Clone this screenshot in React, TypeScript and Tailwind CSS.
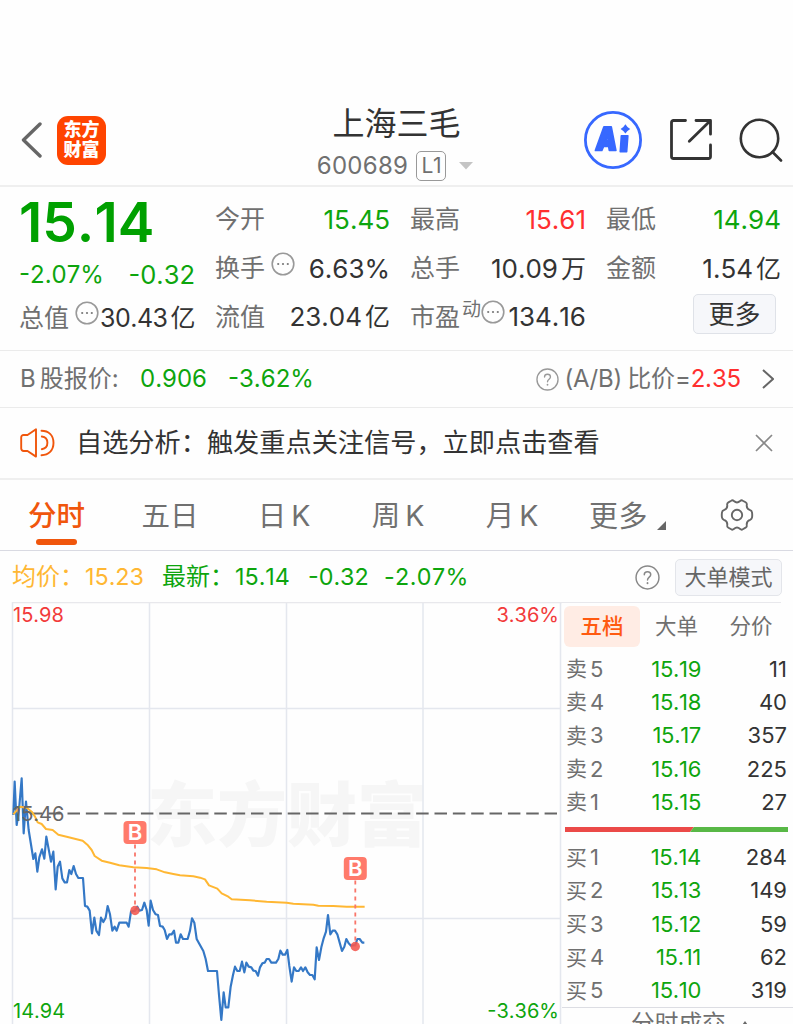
import { clsx } from 'clsx';

const SELLS = [
  ['卖', '5', '15.19', '11'],
  ['卖', '4', '15.18', '40'],
  ['卖', '3', '15.17', '357'],
  ['卖', '2', '15.16', '225'],
  ['卖', '1', '15.15', '27'],
];

const BUYS = [
  ['买', '1', '15.14', '284'],
  ['买', '2', '15.13', '149'],
  ['买', '3', '15.12', '59'],
  ['买', '4', '15.11', '62'],
  ['买', '5', '15.10', '319'],
];

const TABS = [
  ['五日', ''],
  ['日', 'K'],
  ['周', 'K'],
  ['月', 'K'],
];

const PRICE_LINE =
  '40,165 44,65 50,195 57,150 65,55 71,220 78,125 86,210 100,297 106,280 112,335 118,292 126,268 133,296 139,230 153,305 160,275 167,388 173,320 180,305 187,355 194,367 201,367 208,330 214,342 221,318 228,342 235,354 249,354 255,438 262,440 269,452 276,520 283,473 289,512 297,525 303,473 310,486 317,473 323,438 330,463 337,512 344,500 350,512 358,488 380,488 386,500 393,455 405,452 412,440 418,452 426,450 433,428 440,450 446,497 452,422 459,450 467,463 474,465 480,498 488,500 494,510 501,537 508,523 515,523 522,512 528,548 535,548 542,523 549,537 563,537 570,512 576,475 583,488 590,537 597,550 610,573 617,597 624,633 651,633 657,705 664,780 671,697 677,742 685,742 692,680 699,645 705,620 712,633 719,633 726,605 733,637 739,608 746,620 754,622 760,632 767,633 774,647 780,622 787,610 794,608 800,597 807,597 814,608 828,608 835,597 841,572 848,584 855,584 862,570 868,618 875,665 882,622 889,633 896,633 903,622 909,633 916,622 923,637 930,645 937,645 944,658 950,562 957,600 964,562 971,535 978,515 984,465 991,523 998,512 1005,512 1012,523 1019,548 1026,573 1033,560 1039,537 1046,550 1053,557 1066,555 1072,537 1079,537 1087,548 1093,548';

const AVERAGE_LINE =
  '40,163 60,140 80,143 95,155 105,170 113,187 125,192 138,207 158,210 175,224 200,230 248,242 262,254 275,270 284,288 305,302 330,308 358,316 400,322 440,324 470,328 495,337 520,342 540,346 580,349 600,353 615,358 627,376 652,386 665,400 685,410 695,418 750,421 800,425 860,428 880,431 940,434 955,437 1000,438 1040,440 1094,440';

function MoreDots({ className }: { className?: string }) {
  return (
    <svg viewBox="0 0 24 24" className={clsx('h-6 w-6 shrink-0', className)} fill="none">
      <circle cx="12" cy="12" r="10.8" stroke="#999" strokeWidth="1.6" />
      <circle cx="7.2" cy="12" r="1.1" fill="#777" />
      <circle cx="12" cy="12" r="1.1" fill="#777" />
      <circle cx="16.8" cy="12" r="1.1" fill="#777" />
    </svg>
  );
}

function Help({ className }: { className?: string }) {
  return (
    <svg viewBox="0 0 24 24" className={clsx('shrink-0', className)} fill="none" stroke="currentColor" strokeLinecap="round">
      <circle cx="12" cy="12" r="11" strokeWidth="1.4" />
      <path d="M8.9 9.4C8.9 7.6 10.2 6.5 12 6.5s3.1 1.1 3.1 2.8c0 2.2-3.1 2.5-3.1 5" strokeWidth="1.4" />
      <path d="M12 17.3v.2" strokeWidth="1.8" />
    </svg>
  );
}

function Header() {
  return (
    <header className="grid h-[187px] shrink-0 grid-cols-[230px_1fr_230px] border-b-2 border-[#efefef] pt-[95px]">
      <div className="flex items-center pl-[21px]">
        <svg viewBox="0 0 21 36" className="h-9 w-[21px]" fill="none" stroke="#666" strokeWidth="3.4" strokeLinecap="round" strokeLinejoin="round">
          <path d="M19 2 2.5 18 19 34" />
        </svg>
        <div className="ml-[15px] flex h-[49px] w-[49px] flex-col items-center justify-center rounded-[11px] bg-[#ff4400] text-[18px] leading-[20px] font-black text-white">
          <span>东方</span>
          <span>财富</span>
        </div>
      </div>

      <div className="flex flex-col items-center">
        <h1 className="mt-[9px] text-[32px] leading-[40px] text-[#333]">上海三毛</h1>
        <div className="mt-[5px] flex h-[34px] items-center pr-[3px] text-[#707070]">
          <span className="text-[24px] tracking-[0.3px]">600689</span>
          <span className="ml-[8px] flex h-[30px] w-[30px] items-center justify-center rounded-[5px] border-[1.5px] border-[#999] text-[21px] tracking-[-0.5px]">
            L1
          </span>
          <svg viewBox="0 0 14 8" className="ml-[13px] h-2 w-[14px]">
            <path d="M0 0h14L7 7.5z" fill="#c4c4c4" />
          </svg>
        </div>
      </div>

      <div className="flex items-center justify-end pr-[10px]">
        <svg viewBox="0 0 58 58" className="h-[58px] w-[58px]">
          <circle cx="29" cy="29" r="27.6" fill="none" stroke="#3768ff" strokeWidth="2.8" />
          <path
            fillRule="evenodd"
            fill="#3768ff"
            stroke="#3768ff"
            strokeWidth="1.8"
            strokeLinejoin="round"
            d="M20 15.8h7.200l4.600 23.600h-6.400l-.7-4h-5.200l-1.700 4h-6.300zM23.800 23.800l-2 5.800h2.600z"
          />
          <path d="M37.300 24.800h6.600l-1.200 16h-6.500z" fill="#3768ff" stroke="#3768ff" strokeWidth="1.5" strokeLinejoin="round" />
          <path d="M41.400 13.200q1.800 3.200 4.800 4.700-3 1.500-4.800 4.700-1.800-3.200-4.800-4.700 3-1.500 4.800-4.700z" fill="#3768ff" />
        </svg>
        <svg viewBox="0 0 42 42" className="ml-[28px] h-[42px] w-[42px]" fill="none" stroke="#333" strokeWidth="2.8" strokeLinecap="round" strokeLinejoin="round">
          <path d="M15.500 1.500H3.500a2 2 0 0 0-2 2v34a2 2 0 0 0 2 2h35a2 2 0 0 0 2-2V26" />
          <path d="M26 1.500h14.500v13.700M40 2 19.300 22.200" />
        </svg>
        <svg viewBox="0 0 44 44" className="ml-[27px] h-11 w-11" fill="none" stroke="#333" strokeWidth="2.6" strokeLinecap="round">
          <circle cx="20.500" cy="20.500" r="18.700" />
          <path d="m33.500 34 8.500 8.500" />
        </svg>
      </div>
    </header>
  );
}

function Label({ children }: { children: string }) {
  return <span className="text-[25px] whitespace-nowrap text-[#707070]">{children}</span>;
}

function Value({ children, unit, className }: { children: string; unit?: string; className?: string }) {
  return (
    <span className={clsx('ml-auto whitespace-nowrap', className ?? 'text-[26px] text-[#333]')}>
      {children}
      {unit && <span className="ml-[3px] text-[25px]">{unit}</span>}
    </span>
  );
}

function Stats() {
  return (
    <section className="grid h-[164px] shrink-0 grid-cols-[175px_175px_176px_175px] gap-x-5 border-b border-[#ebebeb] pt-[8px] pl-5 leading-none">
      <div>
        <div className="-ml-px flex h-[55px] items-center text-[55px] font-semibold text-[#00a000]">15.14</div>
        <div className="-ml-px flex h-[49px] items-center justify-between text-[24px] text-[#0da50d]">
          <span>-2.07%</span>
          <span className="text-[25.500px]">-0.32</span>
        </div>
        <div className="-ml-px flex h-[38px] items-center">
          <Label>总值</Label>
          <MoreDots className="mb-2.5 ml-[6px]" />
          <Value unit="亿" className="text-[25px] tracking-[-0.500px] text-[#333]">30.43</Value>
        </div>
      </div>
      <div>
        <div className="flex h-[49px] items-center">
          <Label>今开</Label>
          <Value className="text-[26px] text-[#0da50d]">15.45</Value>
        </div>
        <div className="flex h-[49px] items-center">
          <Label>换手</Label>
          <MoreDots className="mb-2.5 ml-[6px]" />
          <Value>6.63%</Value>
        </div>
        <div className="flex h-[48px] items-center">
          <Label>流值</Label>
          <Value unit="亿">23.04</Value>
        </div>
      </div>
      <div>
        <div className="flex h-[49px] items-center">
          <Label>最高</Label>
          <Value className="text-[26px] text-[#ff2f2f]">15.61</Value>
        </div>
        <div className="flex h-[49px] items-center">
          <Label>总手</Label>
          <Value unit="万">10.09</Value>
        </div>
        <div className="flex h-[48px] items-center">
          <Label>市盈</Label>
          <span className="mb-4 ml-[2px] text-[19px] text-[#707070]">动</span>
          <MoreDots className="mb-2.5" />
          <Value>134.16</Value>
        </div>
      </div>
      <div>
        <div className="flex h-[49px] items-center">
          <Label>最低</Label>
          <Value className="text-[26px] text-[#0da50d]">14.94</Value>
        </div>
        <div className="flex h-[49px] items-center">
          <Label>金额</Label>
          <Value unit="亿">1.54</Value>
        </div>
        <button className="mt-px mr-[5px] ml-auto flex h-10 w-[83px] items-center justify-center rounded-[5px] border-[1.5px] border-[#dfe2e8] bg-[#f6f7fa] pt-[2px] text-[26px] text-[#333]">
          更多
        </button>
      </div>
    </section>
  );
}

function BShare() {
  return (
    <section className="flex h-[57px] shrink-0 items-center border-b-[1.5px] border-[#ebebeb] pl-5 text-[24px] leading-none whitespace-nowrap text-[#707070]">
      <span className="w-[120px]">
        B<span className="ml-[4px]">股报价</span>:
      </span>
      <span className="w-[88px] text-[#0da50d]">0.906</span>
      <span className="text-[#0da50d]">-3.62%</span>
      <Help className="ml-auto h-[23px] w-[23px] text-[#999]" />
      <span className="ml-[6px] tracking-[-0.150px]">
        (A/B)<span className="ml-[5px]">比价</span>=<span className="text-[#ff2f2f]">2.35</span>
      </span>
      <svg viewBox="0 0 12 20" className="mr-[19px] ml-[21px] h-5 w-3" fill="none" stroke="#666" strokeWidth="2">
        <path d="m1 1 10 9-10 9" />
      </svg>
    </section>
  );
}

function Notice() {
  return (
    <section className="flex h-[72px] shrink-0 items-center border-b-2 border-[#efefef] pl-5">
      <svg viewBox="0 0 36 30" className="h-[30px] w-9" fill="none" stroke="#f0560c" strokeWidth="1.9" strokeLinejoin="round" strokeLinecap="round">
        <path d="M16 1.200v27.400L7.500 23H3.600A2.400 2.400 0 0 1 1.200 20.600V9.400A2.400 2.400 0 0 1 3.600 7h3.900z" />
        <path d="M21.500 2.800C28.500 2.800 33.500 7 33.500 14.800S28.500 27 21.500 27.200M21.800 8.500c3.600.4 5.600 2.800 5.600 6.300s-2 5.900-5.600 6.400" />
      </svg>
      <span className="ml-[20px] pt-px text-[26.200px] leading-none whitespace-nowrap text-[#333]">
        自选分析：触发重点关注信号，立即点击查看
      </span>
      <svg viewBox="0 0 18 18" className="mr-5 ml-auto h-[18px] w-[18px]" stroke="#888" strokeWidth="1.7">
        <path d="m1 1 16 16M17 1 1 17" />
      </svg>
    </section>
  );
}

function PeriodTabs() {
  return (
    <nav className="flex h-[71px] shrink-0 border-b-[1.5px] border-[#d9dae2] text-[28.500px] leading-none text-[#707070]">
      <div className="flex w-[113px] flex-col items-center">
        <span className="mt-[22px] h-[37px] font-medium text-[#f0560c]">分时</span>
        <span className="h-[6px] w-[41px] rounded-full bg-[#f0560c]" />
      </div>
      {TABS.map(([name, suffix]) => (
        <div key={name} className="flex w-[114px] justify-center pt-[22px]">
          <span>{name}</span>
          {suffix && <span className="ml-[5px]">{suffix}</span>}
        </div>
      ))}
      <div className="flex flex-1 pt-[22px] pl-[20px]">
        <span className="text-[29px] tracking-[0.5px]">更多</span>
        <svg viewBox="0 0 9 9" className="mt-[19px] ml-[9px] h-[9px] w-[9px]">
          <path d="M9 0v9H0z" fill="#666" />
        </svg>
      </div>
      <svg viewBox="0 0 34 32" className="mt-[19px] mr-[39px] h-8 w-[34px]" fill="none" stroke="#666" strokeWidth="1.9" strokeLinejoin="round">
        <path d="M11.200 1.700c1.100-.7 2-.3 2.700.4 1.900 1.600 4.300 1.600 6.200 0 .7-.7 1.600-1.100 2.700-.4l2.800 1.600c1.100.6 1.400 1.400 1.200 2.500-.4 2.600.8 4.600 3.300 5.400 1.100.4 1.700 1 1.900 2.100.3 1.800.3 3.600 0 5.400-.2 1.100-.8 1.700-1.900 2.100-2.500.8-3.700 2.800-3.300 5.400.2 1.100-.1 1.900-1.200 2.500l-2.800 1.600c-1.100.7-2 .3-2.700-.4-1.900-1.600-4.300-1.600-6.200 0-.7.7-1.600 1.100-2.700.4l-2.800-1.600c-1.100-.6-1.400-1.400-1.200-2.500.4-2.600-.8-4.600-3.300-5.400-1.100-.4-1.700-1-1.900-2.100a16 16 0 0 1 0-5.400c.2-1.100.8-1.700 1.900-2.100 2.500-.8 3.700-2.800 3.300-5.400-.2-1.100.1-1.900 1.200-2.500z" />
        <circle cx="17" cy="16" r="5.200" />
      </svg>
    </nav>
  );
}

function QuoteBar() {
  return (
    <div className="flex h-[51px] shrink-0 items-center pt-px pl-[12px] text-[23.300px] leading-none whitespace-nowrap text-[#0da50d]">
      <span className="w-[73px] text-[24px] text-[#ffb733]">均价：</span>
      <span className="w-[77px] text-[#ffb733]">15.23</span>
      <span className="w-[73px] text-[24px]">最新：</span>
      <span className="w-[73px]">15.14</span>
      <span className="w-[76px]">-0.32</span>
      <span className="tracking-[0.400px]">-2.07%</span>
      <Help className="ml-auto h-[25px] w-[25px] text-[#888]" />
      <button className="mr-[11px] ml-[15px] flex h-[37px] w-[107px] items-center justify-center rounded-[5px] border-[1.5px] border-[#e3e5ea] bg-[#f6f7fa] text-[22px] text-[#666]">
        大单模式
      </button>
    </div>
  );
}

function Marker({ x, y, end }: { x: number; y: number; end: number }) {
  return (
    <g>
      <path d={`M${x} ${y + 12}V${end}`} stroke="#f9766a" strokeWidth="1.8" strokeDasharray="4 4" />
      <circle cx={x} cy={end} r="4.700" fill="#f2564f" opacity=".88" />
      <rect x={x - 11.5} y={y - 11.5} width="23" height="23" rx="4" fill="#ff7a6b" />
      <text x={x} y={y + 7.5} textAnchor="middle" fontSize="22" fontWeight="600" fill="#fff">
        B
      </text>
    </g>
  );
}

function Chart() {
  return (
    <svg viewBox="0 602 562 422" className="h-[422px] w-[562px] shrink-0" fill="none">
      <text x="147" y="841" fontSize="70" fontWeight="900" fill="#f6f6f6">
        东方财富
      </text>
      <path d="M12.500 602V1024M149.500 602V1024M286.500 602V1024M423 602V1024M560.500 602V1024M12 708.500H560M12 918.500H560" stroke="#e4e7ee" strokeWidth="1.500" />
      <path d="M12 602.500H562" stroke="#e8e8ec" strokeWidth="1.500" />
      <path d="M67.500 813.500H557" stroke="#666" strokeWidth="2" strokeDasharray="12.500 5.850" />
      <path d="M30 813.500H63" stroke="#666" strokeWidth="2" strokeDasharray="12.500 5.850" />
      <g transform="translate(0 760) scale(.33333)" strokeLinejoin="round">
        <polyline points={PRICE_LINE} stroke="#3478c6" strokeWidth="6.500" />
        <polyline points={AVERAGE_LINE} stroke="#ffb733" strokeWidth="6" />
      </g>
      <g fontSize="20">
        <text x="13" y="820.500" fill="#666">15.46</text>
        <text x="13" y="622" fill="#f23a3a">15.98</text>
        <text x="559" y="622" fill="#f23a3a" textAnchor="end">3.36%</text>
        <text x="13" y="1018" fill="#0da50d">14.94</text>
        <text x="559" y="1018" fill="#0da50d" textAnchor="end">-3.36%</text>
      </g>
      <Marker x={135} y={832.5} end={910.5} />
      <Marker x={355.3} y={868.5} end={946.5} />
    </svg>
  );
}

function Levels({ rows }: { rows: string[][] }) {
  return (
    <ul>
      {rows.map(([side, level, price, volume]) => (
        <li key={level} className="flex h-[33.300px] items-center pr-[6px] pl-[4px] text-[22px]">
          <span className="text-[21px] text-[#707070]">{side}</span>
          <span className="ml-[3px] text-[#707070]">{level}</span>
          <span className="ml-auto text-right tracking-[-0.300px] text-[#0da50d]">{price}</span>
          <span className="w-[86px] text-right text-[#333]">{volume}</span>
        </li>
      ))}
    </ul>
  );
}

function OrderBook() {
  return (
    <aside className="w-[231px] leading-none">
      <div className="mr-[12px] h-[4px] border-t-[1.5px] border-[#e8e8ec]" />
      <div className="flex h-[41px] text-[21.500px] text-[#707070]">
        <span className="ml-[2px] flex w-[76px] items-center justify-center rounded-[6px] bg-[#ffece4] font-medium text-[#ff5a10]">五档</span>
        <span className="flex w-[73px] items-center justify-center">大单</span>
        <span className="flex w-[76px] items-center justify-center">分价</span>
      </div>
      <div className="mt-[5px]">
        <Levels rows={SELLS} />
      </div>
      <svg viewBox="0 0 223 5" className="mt-[9px] mb-[8px] ml-[3px] h-[5px] w-[223px]">
        <path d="M0 0h129l-4 5H0z" fill="#eb4a48" />
        <path d="M129 0h94v5h-98z" fill="#58b846" />
      </svg>
      <Levels rows={BUYS} />
      <div className="flex h-[40px] items-start border-t-[1.5px] border-[#dcdde3] pt-[4px] pl-[69px] text-[23.700px] text-[#707070]">
        分时成交
        <svg viewBox="0 0 10 7" className="mt-[9px] ml-[14px] h-[7px] w-[10px]">
          <path d="M5 0 10 7H0z" fill="#666" />
        </svg>
      </div>
    </aside>
  );
}

export default function App() {
  return (
    <main className="flex h-[1024px] w-[793px] flex-col overflow-hidden bg-[#fefefe] font-['Inter','Noto_Sans_CJK_SC',sans-serif] [font-kerning:none]">
      <Header />
      <Stats />
      <BShare />
      <Notice />
      <PeriodTabs />
      <QuoteBar />
      <div className="flex">
        <Chart />
        <OrderBook />
      </div>
    </main>
  );
}
